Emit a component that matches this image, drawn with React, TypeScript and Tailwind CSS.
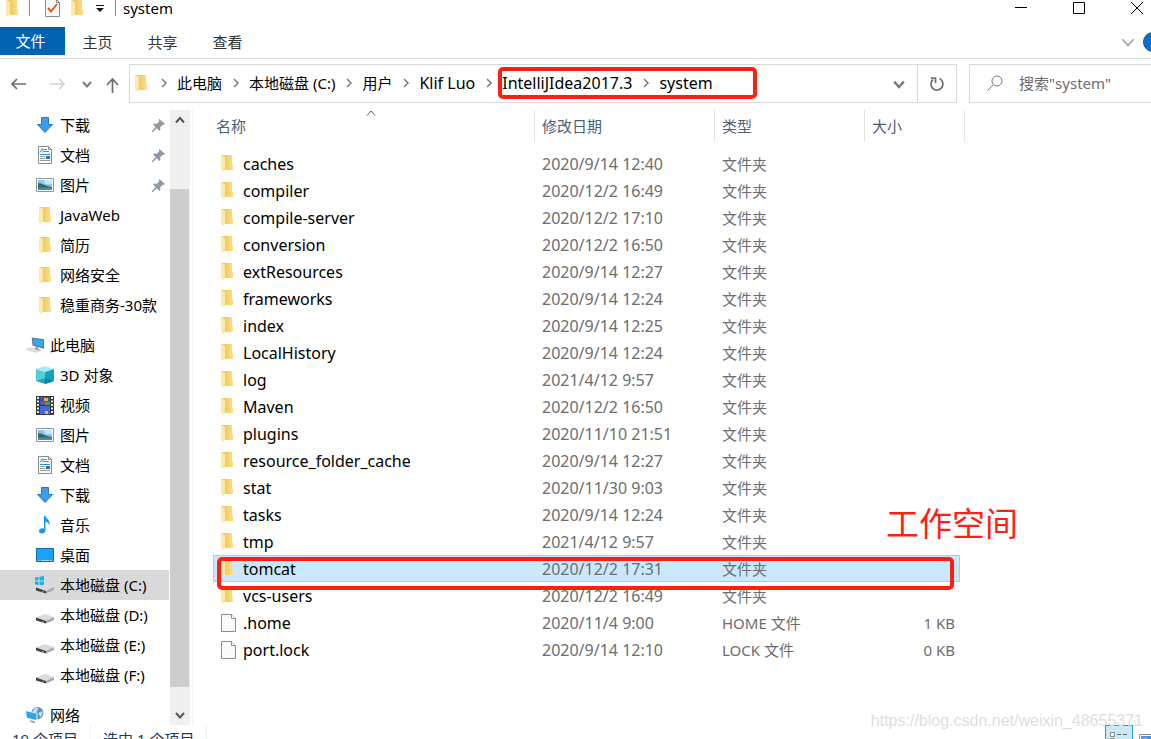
import { useState } from 'react'
import type { ReactNode } from 'react'
import clsx from 'clsx'

type IconName =
  | 'download' | 'document' | 'picture' | 'folder' | 'computer' | 'cube' | 'video'
  | 'music' | 'desktop' | 'systemDrive' | 'drive' | 'network' | 'file'

interface SidebarItem {
  id: string
  label: string
  icon: IconName
  pinned?: boolean
}

interface FileEntry {
  name: string
  date: string
  type: string
  size?: string
}

const quickAccess: SidebarItem[] = [
  { id: 'q-download', label: '下载', icon: 'download', pinned: true },
  { id: 'q-document', label: '文档', icon: 'document', pinned: true },
  { id: 'q-picture', label: '图片', icon: 'picture', pinned: true },
  { id: 'q-javaweb', label: 'JavaWeb', icon: 'folder' },
  { id: 'q-resume', label: '简历', icon: 'folder' },
  { id: 'q-security', label: '网络安全', icon: 'folder' },
  { id: 'q-business', label: '稳重商务-30款', icon: 'folder' },
]

const thisPc: SidebarItem[] = [
  { id: '3d', label: '3D 对象', icon: 'cube' },
  { id: 'video', label: '视频', icon: 'video' },
  { id: 'picture', label: '图片', icon: 'picture' },
  { id: 'document', label: '文档', icon: 'document' },
  { id: 'download', label: '下载', icon: 'download' },
  { id: 'music', label: '音乐', icon: 'music' },
  { id: 'desktop', label: '桌面', icon: 'desktop' },
  { id: 'c', label: '本地磁盘 (C:)', icon: 'systemDrive' },
  { id: 'd', label: '本地磁盘 (D:)', icon: 'drive' },
  { id: 'e', label: '本地磁盘 (E:)', icon: 'drive' },
  { id: 'f', label: '本地磁盘 (F:)', icon: 'drive' },
]

const files: FileEntry[] = [
  { name: 'caches', date: '2020/9/14 12:40', type: '文件夹' },
  { name: 'compiler', date: '2020/12/2 16:49', type: '文件夹' },
  { name: 'compile-server', date: '2020/12/2 17:10', type: '文件夹' },
  { name: 'conversion', date: '2020/12/2 16:50', type: '文件夹' },
  { name: 'extResources', date: '2020/9/14 12:27', type: '文件夹' },
  { name: 'frameworks', date: '2020/9/14 12:24', type: '文件夹' },
  { name: 'index', date: '2020/9/14 12:25', type: '文件夹' },
  { name: 'LocalHistory', date: '2020/9/14 12:24', type: '文件夹' },
  { name: 'log', date: '2021/4/12 9:57', type: '文件夹' },
  { name: 'Maven', date: '2020/12/2 16:50', type: '文件夹' },
  { name: 'plugins', date: '2020/11/10 21:51', type: '文件夹' },
  { name: 'resource_folder_cache', date: '2020/9/14 12:27', type: '文件夹' },
  { name: 'stat', date: '2020/11/30 9:03', type: '文件夹' },
  { name: 'tasks', date: '2020/9/14 12:24', type: '文件夹' },
  { name: 'tmp', date: '2021/4/12 9:57', type: '文件夹' },
  { name: 'tomcat', date: '2020/12/2 17:31', type: '文件夹' },
  { name: 'vcs-users', date: '2020/12/2 16:49', type: '文件夹' },
  { name: '.home', date: '2020/11/4 9:00', type: 'HOME 文件', size: '1 KB' },
  { name: 'port.lock', date: '2020/9/14 12:10', type: 'LOCK 文件', size: '0 KB' },
]

function FolderIcon() {
  return (
    <svg width="12" height="17" viewBox="0 0 12 17">
      <defs>
        <linearGradient id="folderBack" x1="0" x2="1">
          <stop offset="0.3" stopColor="#eec862" />
          <stop offset="1" stopColor="#ffdf86" />
        </linearGradient>
      </defs>
      <path d="M0 0h11v9l1 1v5H3z" fill="url(#folderBack)" />
      <path d="M0 0l4 2v13l-1 2-3-2z" fill="#ffe9a6" />
    </svg>
  )
}

function Drive({ system }: { system?: boolean }) {
  return (
    <svg width="18" height="18" viewBox="0 0 18 18" overflow="visible">
      {system && (
        <path d="M-1 1.500l3.500-.5v3.500H-1zM3.500 .8L8 0v4.500H3.500zM-1 5.500h3.500V9L-1 8.500zM3.500 5.500H8V10l-4.500-.8z" fill="#14b4ea" />
      )}
      <path d="M0 11.500L9 8l9 3-8 4z" fill="#d9dadd" />
      <path d="M10 15l8-4v3L10 17.500z" fill="#a5a7ab" />
      <path d="M0 11.500L10 15v2.500L0 14.500z" fill="#3d4145" />
      <path d="M6 15l2 .5v1l-2-.4z" fill="#46cf57" />
    </svg>
  )
}

function Icon({ name }: { name: IconName }) {
  switch (name) {
    case 'folder':
      return <FolderIcon />
    case 'download':
      return (
        <svg width="18" height="18" viewBox="0 0 18 18">
          <path d="M5.500 1.500h7v7h4L9 16.500l-7.500-8h4z" fill="#3c9bea" stroke="#2578c4" />
        </svg>
      )
    case 'document':
      return (
        <svg width="18" height="18" viewBox="0 0 18 18">
          <path d="M2.500.5h10l3 3v14h-13z" fill="#fff" stroke="#8a8a8a" />
          <path d="M12.500.5v3h3" fill="none" stroke="#8a8a8a" />
          <path d="M4 6.500L6 3h1v3.500M8 3.500h3M8 5.500h5M4 8.500h10" fill="none" stroke="#2a8fd6" />
          <path d="M4 10.500h5M4 12.500h5M4 14.500h10" stroke="#9a9a9a" />
          <path d="M10 10h4v3h-4z" fill="#2a6fa8" />
        </svg>
      )
    case 'picture':
      return (
        <svg width="18" height="14" viewBox="0 0 18 14">
          <path d="M.5.5h17v13H.5z" fill="#fff" stroke="#8f9499" />
          <path d="M2 2h14v10H2z" fill="#8cc4f2" />
          <path d="M8 2h8v4H9z" fill="#c9e6fb" />
          <path d="M2 5c4 0 7 3 14 4v1H2z" fill="#2f6d5c" />
          <path d="M2 9.500h14V12H2z" fill="#4a88b8" />
        </svg>
      )
    case 'computer':
      return (
        <svg width="19" height="18" viewBox="0 0 19 18">
          <path d="M6 1l13 2v10L7 9.500z" fill="#5b6f82" />
          <path d="M7 2l11 2v7.500L8 8.700z" fill="#35a7f5" />
          <path d="M10 10.500l3 1v2l3 1-3 1-4-2z" fill="#9aa4ad" />
          <path d="M0 13.500l5-1.500 9 3-4 1.800z" fill="#dfe3e6" stroke="#b4babf" strokeWidth=".5" />
        </svg>
      )
    case 'cube':
      return (
        <svg width="18" height="18" viewBox="0 0 18 18">
          <path d="M9 0l9 3-9 3-9-3z" fill="#a5ecf3" />
          <path d="M0 3l9 3v8l-9 1z" fill="#55cfdb" />
          <path d="M18 3L9 6v8l9 1z" fill="#149fc4" />
          <path d="M0 15l9-3 9 3-9 3z" fill="#17a9bf" />
          <path d="M9 12v6l9-3z" fill="#0b84a8" />
        </svg>
      )
    case 'video':
      return (
        <svg width="18" height="19" viewBox="0 0 18 19">
          <path d="M0 0h18v19H0z" fill="#3a3a3a" />
          <path d="M4 1h10v8H4z" fill="#2f55c8" />
          <path d="M4 10h10v8H4z" fill="#3b6be0" />
          <path d="M8 2h4v3H8zM9 15h3v3H9z" fill="#f0b42c" />
          <path d="M5 5h3v3H5zM9 10h3v2H9z" fill="#d43b2c" />
          <path d="M9 6h5v3H9z" fill="#5f9b3c" />
          <path d="M2 1v17M16 1v17" stroke="#e8e8e8" strokeWidth="2" strokeDasharray="2 1.500" />
        </svg>
      )
    case 'music':
      return (
        <svg width="18" height="18" viewBox="0 0 18 18">
          <path d="M8 0h1.500c.5 3 5 4 4 9.500-.7-2.500-2-3.500-4-4V14c0 2-1.500 3.500-3.500 3.500S3 16.500 3 15s1.500-2.800 3.500-2.800L8 12.500z" fill="#1599f0" />
        </svg>
      )
    case 'desktop':
      return (
        <svg width="18" height="14" viewBox="0 0 18 14">
          <path d="M.5.5h17v13H.5z" fill="#1da1f8" stroke="#0f6cad" />
          <path d="M2 12.500h1M5 12.500h8M14 12.500h2" stroke="#d6efff" strokeWidth=".7" />
        </svg>
      )
    case 'systemDrive':
      return <Drive system />
    case 'drive':
      return <Drive />
    case 'network':
      return (
        <svg width="19" height="18" viewBox="0 0 19 18">
          <circle cx="12" cy="7" r="6.500" fill="#5b93b8" />
          <path d="M8 3c2-2 4-2 5-1l-1 3-3 2-2-1zM14 6l3-1c1 2 0 5-2 6l-2-3z" fill="#bfe0ea" />
          <path d="M0 4l12 2.500v8.500L1 12.500z" fill="#e8f3fa" />
          <path d="M0 5l11 2.300v7L1 11.800z" fill="#2fa4ee" />
          <path d="M4 14.500l5 1 1 2-5-1z" fill="#7d98ab" />
        </svg>
      )
    default:
      return (
        <svg width="15" height="18" viewBox="0 0 15 18">
          <path d="M.5.5h10l4 4v13H.5z" fill="#fafafa" stroke="#8c8c8c" />
          <path d="M10.500.5v4h4" fill="#fff" stroke="#8c8c8c" />
        </svg>
      )
  }
}

function Chevron({ dir, size = 10, stroke = 2, className }: { dir: 'up' | 'down' | 'right'; size?: number; stroke?: number; className?: string }) {
  const paths = { up: 'M1 7.500L5 3l4 4.500', down: 'M1 3l4 4.500L9 3', right: 'M3 1l4 4-4 4' }
  return (
    <svg width={size} height={size} viewBox="0 0 10 10" className={className}>
      <path d={paths[dir]} fill="none" stroke="currentColor" strokeWidth={stroke} />
    </svg>
  )
}

function PinIcon() {
  return (
    <svg width="13" height="13" viewBox="0 0 13 13" className="text-[#8e9ba6]">
      <path d="M7.500 0L13 5l-1 1-1.200-.2-2.600 2.500.2 2.700-1 1L4.700 9.300 1 13H0v-1l3.500-3.900L1 5.500l1-1 2.800.3 2.500-2.600L6.800.8z" fill="currentColor" />
    </svg>
  )
}

function SidebarRow({ item, root, active, onSelect }: { item: SidebarItem; root?: boolean; active: boolean; onSelect: (id: string) => void }) {
  return (
    <button
      type="button"
      onClick={() => onSelect(item.id)}
      className={clsx(
        'flex h-[30px] w-full shrink-0 items-center gap-1.5 whitespace-nowrap pr-1 text-left',
        root ? 'pl-[26px]' : 'pl-9',
        active && 'bg-[#d9d9d9]'
      )}
    >
      <span className="flex w-[18px] shrink-0 justify-center"><Icon name={item.icon} /></span>
      <span className="flex-1">{item.label}</span>
      {item.pinned && <PinIcon />}
    </button>
  )
}

function Crumb({ latin, children }: { latin?: boolean; children: ReactNode }) {
  return <a href="#" className={clsx('whitespace-nowrap', latin && 'text-base leading-5')}>{children}</a>
}

function CrumbArrow() {
  return (
    <span className="flex w-[27px] justify-center text-[#7a7a7a]">
      <Chevron dir="right" size={10} stroke={1.5} />
    </span>
  )
}

export default function App() {
  const [location, setLocation] = useState('c')
  const [selected, setSelected] = useState('tomcat')

  return (
    <div className="relative flex h-screen flex-col overflow-hidden bg-white font-['Noto_Sans','Noto_Sans_CJK_SC',sans-serif] text-[15px] leading-5 text-black">
      {/* title bar */}
      <header className="flex h-[27px] shrink-0 items-start justify-between">
        <div className="flex h-4 items-center">
          <span className="ml-1.5"><FolderIcon /></span>
          <span className="ml-[11px] h-4 w-px bg-[#8a8a8a]" />
          <button type="button" aria-label="属性" className="ml-[15px]">
            <svg width="15" height="18" viewBox="0 0 15 18">
              <path d="M.5.500h11l3 3v14H.5z" fill="#f6f8fa" stroke="#8a8a8a" />
              <path d="M11.500.5v3h3" fill="none" stroke="#8a8a8a" />
              <path d="M3 9l3 3.500L12 5" fill="none" stroke="#e8590c" strokeWidth="2" />
            </svg>
          </button>
          <button type="button" aria-label="新建文件夹" className="ml-[11px]"><FolderIcon /></button>
          <button type="button" aria-label="自定义快速访问工具栏" className="ml-[13px]">
            <svg width="8" height="7" viewBox="0 0 8 7"><path d="M0 0h8v1H0zM0 3h8L4 7z" fill="#111" /></svg>
          </button>
          <span className="ml-[11px] h-4 w-px bg-[#8a8a8a]" />
          <h1 className="ml-[7px]">system</h1>
        </div>
        <div className="flex h-4 items-center gap-[46px] pr-2">
          <button type="button" aria-label="最小化"><svg width="12" height="12" viewBox="0 0 12 12"><path d="M0 5.500h12" stroke="#000" /></svg></button>
          <button type="button" aria-label="最大化"><svg width="12" height="12" viewBox="0 0 12 12"><path d="M.5.5h11v11H.5z" fill="none" stroke="#000" /></svg></button>
          <button type="button" aria-label="关闭"><svg width="12" height="12" viewBox="0 0 12 12"><path d="M0 0l12 12M12 0L0 12" stroke="#000" /></svg></button>
        </div>
      </header>

      {/* ribbon tabs */}
      <nav className="flex h-8 shrink-0 items-start border-b border-[#dadbdc] text-[#333]">
        <button type="button" className="h-7 w-[65px] bg-[#0063b1] pr-1 text-white">文件</button>
        <button type="button" className="h-7 w-[65px] pt-0.5">主页</button>
        <button type="button" className="h-7 w-[65px] pt-0.5">共享</button>
        <button type="button" className="h-7 w-[65px] pt-0.5">查看</button>
        <div className="ml-auto flex h-[30px] items-center gap-2 overflow-hidden">
          <button type="button" aria-label="展开功能区" className="text-[#a3a3a3]"><Chevron dir="down" size={14} stroke={1.2} /></button>
          <button type="button" aria-label="帮助" className="-mr-3 size-5 rounded-full border border-[#0b5394] bg-[#0a6fcb]" />
        </div>
      </nav>

      {/* address bar */}
      <div className="flex shrink-0 pt-[5px]">
        <div className="flex w-[129px] shrink-0 items-center pl-[11px]">
          <button type="button" aria-label="后退">
            <svg width="15" height="12" viewBox="0 0 15 12"><path d="M6 1L1 6l5 5M1 6h14" fill="none" stroke="#6d6d6d" strokeWidth="1.700" /></svg>
          </button>
          <button type="button" aria-label="前进" className="ml-6">
            <svg width="15" height="12" viewBox="0 0 15 12"><path d="M9 1l5 5-5 5M14 6H0" fill="none" stroke="#d3d3d3" strokeWidth="1.700" /></svg>
          </button>
          <button type="button" aria-label="最近浏览的位置" className="ml-[17px] text-[#7a7a7a]"><Chevron dir="down" /></button>
          <button type="button" aria-label="上移" className="ml-3.5 pt-1">
            <svg width="13" height="15" viewBox="0 0 13 15"><path d="M1 7l5.500-6L12 7M6.500 1v14" fill="none" stroke="#6d6d6d" strokeWidth="1.700" /></svg>
          </button>
        </div>
        <div className="flex h-[39px] min-w-0 flex-1 items-center border border-[#d9d9d9] pl-[5px]">
          <span className="mr-[3px]"><FolderIcon /></span>
          <div className="flex items-center pb-0.5">
            <CrumbArrow />
            <Crumb>此电脑</Crumb>
            <CrumbArrow />
            <Crumb>本地磁盘 (C:)</Crumb>
            <CrumbArrow />
            <Crumb>用户</Crumb>
            <CrumbArrow />
            <Crumb latin>Klif Luo</Crumb>
            <CrumbArrow />
            <span className="relative flex items-center">
              <Crumb latin>IntelliJIdea2017.3</Crumb>
              <CrumbArrow />
              <Crumb latin>system</Crumb>
              <span className="pointer-events-none absolute -left-1 -right-11 -top-1.5 h-8 rounded-[5px] border-4 border-[#ff1f12]" />
            </span>
          </div>
          <button type="button" aria-label="以前的位置" className="ml-auto flex h-full w-9 items-center justify-center text-[#7a7a7a]"><Chevron dir="down" size={12} /></button>
          <button type="button" aria-label="刷新" className="flex h-full w-[39px] items-center justify-center border-l border-[#d9d9d9]">
            <svg width="16" height="16" viewBox="0 0 16 16">
              <path d="M10.500 2.600A6 6 0 1 1 4 3.500" fill="none" stroke="#6d6d6d" strokeWidth="1.700" />
              <path d="M1.500 2h5v5" fill="none" stroke="#6d6d6d" strokeWidth="1.700" />
            </svg>
          </button>
        </div>
        <label className="ml-3 flex h-[39px] w-[182px] shrink-0 items-center gap-4 border border-r-0 border-[#d9d9d9] pb-0.5 pl-[17px]">
          <svg width="16" height="16" viewBox="0 0 16 16" className="shrink-0">
            <circle cx="10" cy="6" r="5" fill="none" stroke="#777" />
            <path d="M6.300 9.700L.5 15.500" stroke="#777" />
          </svg>
          <input type="text" aria-label="搜索" placeholder={'搜索"system"'} className="w-full min-w-0 outline-none placeholder:text-[#6d6d6d] placeholder:opacity-100" />
        </label>
      </div>

      {/* sidebar and file list */}
      <div className="flex min-h-0 flex-1 pt-[7px]">
        <aside className="flex w-[193px] shrink-0 border-r border-[#f0f0f0]">
          <div className="flex min-w-0 flex-1 flex-col overflow-hidden">
            {quickAccess.map(item => <SidebarRow key={item.id} item={item} active={location === item.id} onSelect={setLocation} />)}
            <div className="mt-2.5 flex shrink-0 flex-col">
              <SidebarRow item={{ id: 'pc', label: '此电脑', icon: 'computer' }} root active={location === 'pc'} onSelect={setLocation} />
              {thisPc.map(item => <SidebarRow key={item.id} item={item} active={location === item.id} onSelect={setLocation} />)}
            </div>
            <div className="mt-2.5 shrink-0">
              <SidebarRow item={{ id: 'network', label: '网络', icon: 'network' }} root active={location === 'network'} onSelect={setLocation} />
            </div>
          </div>
          <div className="mr-0.5 ml-px flex w-5 shrink-0 flex-col bg-[#f0f0f0] text-[#555]">
            <button type="button" aria-label="向上滚动" className="flex h-5 w-[19px] items-center justify-center"><Chevron dir="up" /></button>
            <div className="flex flex-1 flex-col pt-[59px] pb-[18px]">
              <div className="w-[19px] flex-1 bg-[#cdcdcd]" />
            </div>
            <button type="button" aria-label="向下滚动" className="flex h-5 w-[19px] items-center justify-center"><Chevron dir="down" /></button>
          </div>
        </aside>

        <main className="relative min-w-0 flex-1 overflow-hidden pl-5">
          <table className="w-[747px] table-fixed border-separate border-spacing-0 text-left">
            <colgroup>
              <col />
              <col className="w-[180px]" />
              <col className="w-[150px]" />
              <col className="w-[95px]" />
            </colgroup>
            <thead className="text-[#4c607a]">
              <tr className="h-8">
                <th className="relative border-r border-[#e5e5e5] pl-[3px] font-normal">
                  名称
                  <Chevron dir="up" stroke={1} className="absolute left-[153px] -top-0.5 text-[#555]" />
                </th>
                <th className="border-r border-[#e5e5e5] pl-[7px] font-normal">修改日期</th>
                <th className="border-r border-[#e5e5e5] pl-[7px] font-normal">类型</th>
                <th className="relative pl-[7px] font-normal">
                  大小
                  <span className="absolute -right-[5px] top-0 h-full w-px bg-[#e5e5e5]" />
                </th>
              </tr>
            </thead>
            <tbody className="text-[#6d6d6d]">
              <tr className="h-2"><td colSpan={4} /></tr>
              {files.map(file => (
                <tr
                  key={file.name}
                  onClick={() => setSelected(file.name)}
                  className={clsx('relative h-[27px]', selected === file.name && 'bg-[#cce8ff] outline outline-1 -outline-offset-1 outline-[#99d1ff]')}
                >
                  <td className="pl-2 text-base leading-5">
                    <span className="flex items-center text-black">
                      <span className="w-[22px]"><Icon name={file.size ? 'file' : 'folder'} /></span>
                      {file.name}
                    </span>
                  </td>
                  <td className="pl-[7px] text-base leading-5">{file.date}</td>
                  <td className="pl-[7px]">{file.type}</td>
                  <td className="pr-[5px] text-right">
                    {file.size}
                    {file.name === 'tomcat' && (
                      <span className="pointer-events-none absolute left-1 right-1.5 top-0.5 z-10 h-[33px] rounded-[5px] border-4 border-[#ff1f12]" />
                    )}
                  </td>
                </tr>
              ))}
            </tbody>
          </table>
          <p className="absolute left-[693px] top-[392px] font-['Noto_Sans_CJK_SC',sans-serif] text-[33px] leading-10 text-[#ff1f12]">工作空间</p>
        </main>
      </div>

      {/* status bar */}
      <footer className="flex h-3.5 shrink-0 items-start overflow-hidden leading-7 text-[#1e3a5f]">
        <span className="border-r border-[#f0f0f0] px-3">19 个项目</span>
        <span className="border-r border-[#f0f0f0] px-3">选中 1 个项目</span>
        <div className="ml-auto flex gap-1.5">
          <button type="button" aria-label="详细信息" className="flex h-6 w-7 justify-center border border-[#26a0da] bg-[#cbe8f6] pt-1.5">
            <svg width="18" height="12" viewBox="0 0 18 12">
              <path d="M.5.5h4v4h-4zM.5 6.500h4v4h-4z" fill="#fff" stroke="#888" />
              <path d="M7 2.500h4M13 2.500h4M7 8.500h4M13 8.500h4" stroke="#666" />
            </svg>
          </button>
          <button type="button" aria-label="大缩略图" className="-mr-2 mt-[7px] h-5">
            <svg width="20" height="16" viewBox="0 0 20 16"><path d="M.5.5h19v15H.5z" fill="#fff" stroke="#888" /><path d="M2 2h16v12H2z" fill="#4e93e6" /><path d="M2 5l5-1 5 3v7H2z" fill="#a9d2f5" /></svg>
          </button>
        </div>
      </footer>
      <p className="pointer-events-none absolute bottom-2 right-2 font-['Liberation_Sans',sans-serif] text-base leading-5 text-[#dedede]">https://blog.csdn.net/weixin_48655371</p>
    </div>
  )
}
